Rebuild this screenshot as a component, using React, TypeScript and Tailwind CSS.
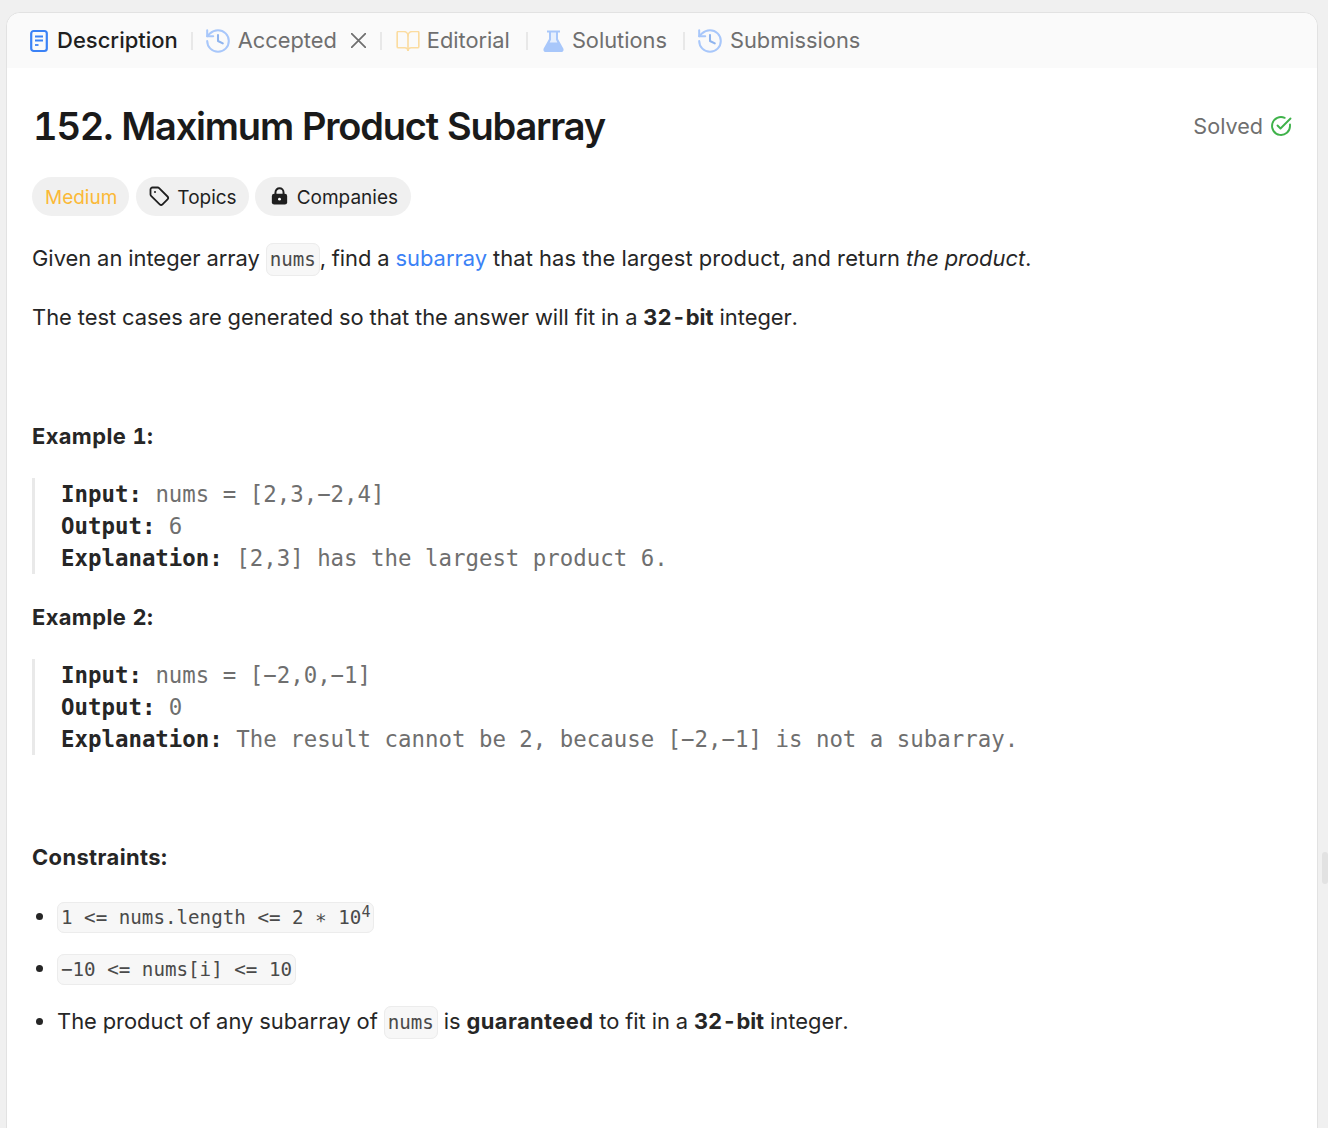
import React from 'react';

const sans = "font-['Inter',sans-serif] tabular-nums";
const mono = "font-['DejaVu_Sans_Mono',monospace]";

const Divider = () => <div className="mx-[13px] h-[18px] w-[2px] bg-[#e8e8e8]"></div>;

const DocIcon = () => (
  <svg width="18" height="24" viewBox="0 0 18 24" fill="none" className="mr-[9px]">
    <rect x="1.200" y="2" width="15.600" height="20" rx="2.500" stroke="#3b82f6" strokeWidth="2.200" />
    <path d="M5 7.500h8M5 11.500h8" stroke="#3b82f6" strokeWidth="1.800" />
    <path d="M5 16h3.500" stroke="#3b82f6" strokeWidth="1.800" />
  </svg>
);

const HistoryIcon = () => (
  <svg width="24" height="24" viewBox="2 2 20 20" fill="none" stroke="#a8c7fa" strokeWidth="1.700" strokeLinecap="round" strokeLinejoin="round">
    <path d="M3 12a9 9 0 1 0 9-9 9.750 9.750 0 0 0-6.740 2.740L3 8" />
    <path d="M3 3v5h5" />
    <path d="M12 7v5l4 2" stroke="#8fb4ee" />
  </svg>
);

const BookIcon = () => (
  <svg width="24" height="20" viewBox="1.500 2.500 21 18.500" fill="none" stroke="#fbdca0" strokeWidth="1.500" strokeLinecap="round" strokeLinejoin="round" className="ml-[1px] mr-[7px]">
    <path d="M12 7v14" />
    <path d="M3 18a1 1 0 0 1-1-1V4a1 1 0 0 1 1-1h5a4 4 0 0 1 4 4 4 4 0 0 1 4-4h5a1 1 0 0 1 1 1v13a1 1 0 0 1-1 1h-6a3 3 0 0 0-3 3 3 3 0 0 0-3-3z" />
  </svg>
);

const FlaskIcon = () => (
  <svg width="21" height="24" viewBox="0 0 21 24" fill="none" className="ml-[2px] mr-[8px]">
    <path d="M4 1.500h13v2h-2v6.500l5.300 9.500c.8 1.700-.3 3.500-2.300 3.500H3c-2 0-3.100-1.800-2.300-3.500L6 10V3.500H4z" fill="#a8c7fa" />
    <path d="M8 3.500h5v7.200l1.400 2.800H6.600L8 10.700z" fill="#e6effd" />
  </svg>
);

const CloseIcon = () => (
  <svg width="15" height="15" viewBox="6 6 12 12" fill="none" stroke="#6f6f6f" strokeWidth="1.400" strokeLinecap="round" className="ml-[14px] mr-[1px]">
    <path d="M6.500 6.500l11 11M17.500 6.500l-11 11" />
  </svg>
);

const TagIcon = () => (
  <svg width="21" height="21" viewBox="0 0 21 21" fill="none" stroke="#1f1f1f" strokeWidth="1.800" strokeLinejoin="round" className="mr-[7px] -mt-[5px]">
    <path d="M1.500 3.500a2 2 0 0 1 2-2h5.200a2 2 0 0 1 1.400.6l8.400 8.400a2 2 0 0 1 0 2.800l-5 5a2 2 0 0 1-2.800 0L2.100 9.900a2 2 0 0 1-.6-1.400z" />
    <circle cx="6" cy="6" r="1" fill="#1f1f1f" stroke="none" />
  </svg>
);

const LockIcon = () => (
  <svg width="17" height="18" viewBox="0 0 18 20" fill="none" className="ml-[3px] mr-[9px] -mt-[5px]">
    <path d="M4.500 9V6a4.500 4.500 0 0 1 9 0v3" stroke="#1f1f1f" strokeWidth="2.200" />
    <rect x="0.500" y="7.500" width="17" height="12" rx="2.500" fill="#1f1f1f" />
    <circle cx="9" cy="13.500" r="1.600" fill="#ffffff" />
  </svg>
);

const SolvedIcon = () => (
  <svg width="22" height="22" viewBox="0 0 22 22" fill="none" stroke="#3fb24a" strokeWidth="1.900" strokeLinecap="round" strokeLinejoin="round" className="ml-[7px]">
    <path d="M20 9.500V11a9 9 0 1 1-5.300-8.200" />
    <path d="M7.500 10.500l3 3L20.500 3.500" />
  </svg>
);

const Code = ({ children, tight }: { children: React.ReactNode; tight?: boolean }) => (
  <code
    className={`${mono} rounded-[7px] border border-[#ececec] bg-[#f7f7f7] px-[3px] text-[19.200px] text-[#4a4a4a] ${
      tight ? 'py-[3px]' : 'py-[4px]'
    }`}
  >
    {children}
  </code>
);

const Example = ({ lines }: { lines: [string, string][] }) => (
  <div className={`${mono} mt-[24px] border-l-[3px] border-[#e9e9e9] pl-[26px] text-[22.400px] leading-[32px] text-[#6f6f6f]`}>
    {lines.map(([label, value]) => (
      <div key={label} className="whitespace-pre">
        <strong className="font-bold text-[#262626]">{label}</strong> {value}
      </div>
    ))}
  </div>
);

const Bold = ({ children }: { children: React.ReactNode }) => (
  <strong className="font-bold tracking-[0.4px]">{children}</strong>
);

const Bits = () => <strong className="font-bold">32-bit</strong>;

const App: React.FC = () => {
  return (
    <div className={`${sans} relative h-[1128px] overflow-hidden bg-[#f0f0f0] pl-[6px] pr-[10px] pt-[12px]`}>
      <div className="h-[1140px] rounded-t-[14px] border border-[#e2e2e2] bg-white">
        {/* Tabs */}
        <div className="flex h-[55px] items-center rounded-t-[14px] bg-[#fafafa] pl-[23px] text-[21.800px] text-[#6f6f6f]">
          <DocIcon />
          <span className="text-[22px] font-medium text-[#1f1f1f]">Description</span>
          <Divider />
          <HistoryIcon />
          <span className="ml-[8px]">Accepted</span>
          <CloseIcon />
          <Divider />
          <BookIcon />
          <span className="pr-[3px]">Editorial</span>
          <Divider />
          <FlaskIcon />
          <span className="pr-[3px]">Solutions</span>
          <Divider />
          <HistoryIcon />
          <span className="ml-[8px]">Submissions</span>
        </div>

        {/* Content */}
        <div className="px-[25px]">
          <div className="mt-[33px] flex items-center justify-between">
            <h1 className="pl-[1px] text-[38px] font-semibold leading-[50px] tracking-[-1.200px] text-[#1a1a1a]">152. Maximum Product Subarray</h1>
            <div className="flex items-center text-[21.600px] text-[#6f6f6f]">
              Solved
              <SolvedIcon />
            </div>
          </div>

          <div className="mt-[26px] flex items-center text-[19px] text-[#1f1f1f]">
            <span className="flex h-[39px] items-center rounded-full bg-[#f0f0f0] pl-[13px] pr-[12px] pt-[4px] text-[#fbb937]">Medium</span>
            <span className="ml-[7px] flex h-[39px] items-center rounded-full bg-[#f0f0f0] pl-[13px] pr-[12px] pt-[4px]">
              <TagIcon />
              Topics
            </span>
            <span className="ml-[6px] flex h-[39px] items-center rounded-full bg-[#f0f0f0] px-[13px] pt-[4px]">
              <LockIcon />
              Companies
            </span>
          </div>

          <div className="text-[21.900px] leading-[35px] text-[#262626]">
            <p className="mt-[25px]">
              Given an integer array <Code>nums</Code>, find a <span className="text-[#3b82f6]">subarray</span> <span className="tracking-[0.130px]">that has the largest product, and return</span> <em>the product</em>.
            </p>
            <p className="mt-[23px]">
              The test cases are generated so that the answer will fit in a <Bits /> integer.
            </p>

            <p className="mt-[84px]"><Bold>Example 1:</Bold></p>
            <Example
              lines={[
                ['Input:', 'nums = [2,3,\u22122,4]'],
                ['Output:', '6'],
                ['Explanation:', '[2,3] has the largest product 6.'],
              ]}
            />
            <p className="mt-[26px]"><Bold>Example 2:</Bold></p>
            <Example
              lines={[
                ['Input:', 'nums = [\u22122,0,\u22121]'],
                ['Output:', '0'],
                ['Explanation:', 'The result cannot be 2, because [\u22122,\u22121] is not a subarray.'],
              ]}
            />

            <p className="mt-[85px]"><Bold>Constraints:</Bold></p>
            <ul className="mt-[24px] list-disc pl-[25px]">
              <li>
                <Code tight>
                  1 &lt;= nums.length &lt;= 2 {'\u2217'} 10<sup className="text-[15px]">4</sup>
                </Code>
              </li>
              <li className="mt-[16px]">
                <Code tight>{'\u221210'} &lt;= nums[i] &lt;= 10</Code>
              </li>
              <li className="mt-[17px]">
                The product of any subarray of <Code>nums</Code> is <Bold>guaranteed</Bold> to fit in a <Bits /> integer.
              </li>
            </ul>
          </div>
        </div>
      </div>
      {/* scroll handle */}
      <div className="absolute right-0 top-[852px] h-[32px] w-[6px] rounded-full bg-[#e2e2e2]"></div>
    </div>
  );
};

export default App;
